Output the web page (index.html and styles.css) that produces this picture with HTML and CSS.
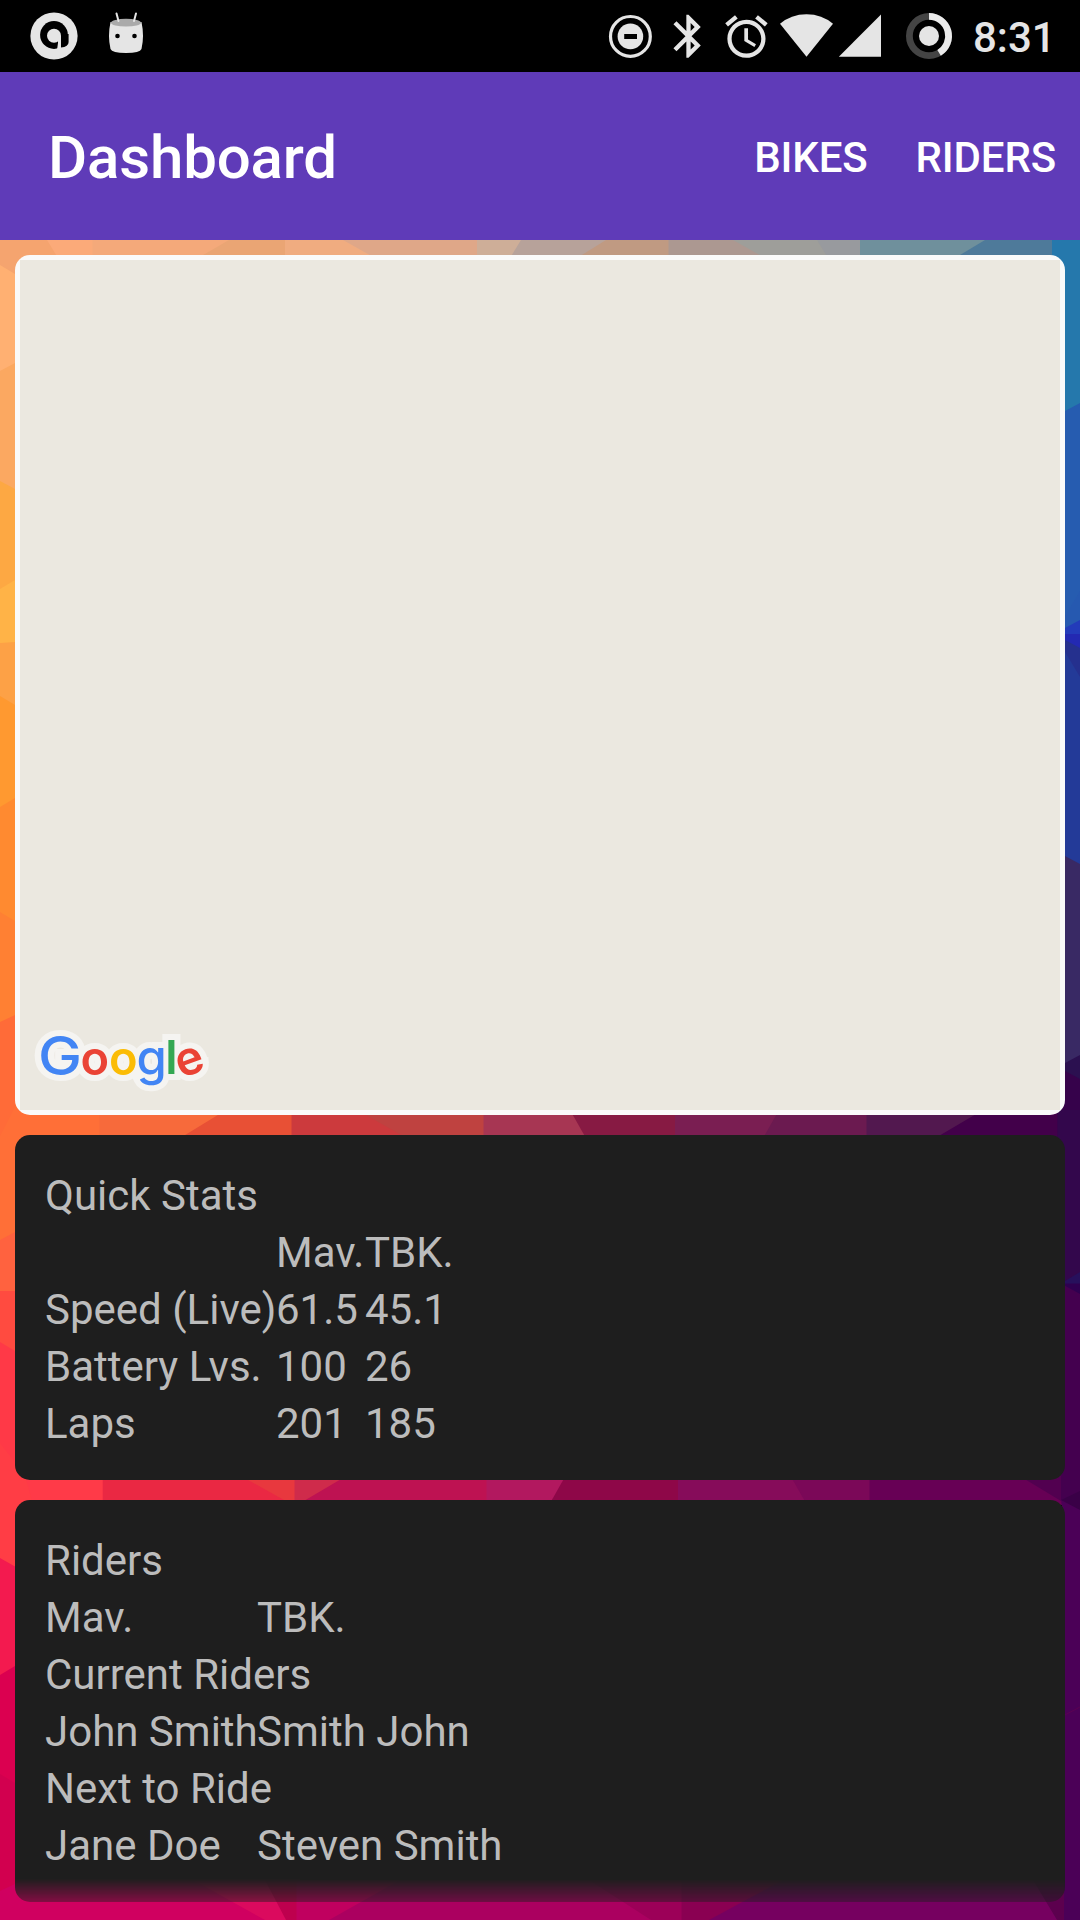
FILE: index.html
```html
<!DOCTYPE html>
<html lang="en">
<head>
<meta charset="utf-8">
<title>Dashboard</title>
<link rel="stylesheet" href="styles.css">
</head>
<body>
<div class="screen">
  <header class="status-bar">
    <svg class="status-icon" width="54" height="72" viewBox="27 0 54 72">
      <circle cx="54" cy="36" r="23.6" fill="#e5e5e5"/>
      <circle cx="54" cy="35" r="13.9" fill="#000"/>
      <circle cx="54" cy="35.8" r="7" fill="#e5e5e5"/>
      <path d="M58 36h3v14h-4l1-7z" fill="#e5e5e5"/>
      <path d="M61 34h7.6v8q0 5-7.6 5.400z" fill="#000"/>
    </svg>
    <svg class="status-icon robot" width="54" height="72" viewBox="99 0 54 72">
      <path d="M110.500 22Q126 25 141.500 22Q144.500 36 141.500 49Q140 53 126 53T110.500 49Q107.500 36 110.500 22Z" fill="#e5e5e5"/>
      <ellipse cx="126" cy="22.700" rx="15" ry="3.900" fill="#aaa"/>
      <path d="M116.500 13.500l2 7.500M136 13.500l-2 7.500" stroke="#e5e5e5" stroke-width="2" stroke-linecap="round"/>
      <circle cx="117.500" cy="36" r="2.300"/><circle cx="134.500" cy="36" r="2.300"/>
    </svg>
    <div class="status-right">
      <svg class="status-icon" width="54" height="72" viewBox="606 0 54 72">
        <circle cx="630.400" cy="36.400" r="19.900" fill="none" stroke="#e5e5e5" stroke-width="3.200"/>
        <circle cx="630.400" cy="36.400" r="12.800" fill="#e5e5e5"/>
        <path d="M624.200 34h12.800v5h-12.800z"/>
      </svg>
      <svg class="status-icon" width="55" height="72" viewBox="660 0 55 72">
        <path transform="translate(662.700 10.500) scale(2.150)" fill="#e5e5e5" d="M17.71 7.71L12 2h-1v7.590L6.410 5 5 6.410 10.590 12 5 17.590 6.410 19 11 14.410V22h1l5.710-5.710-4.300-4.290 4.300-4.290zM13 5.830l1.880 1.880L13 9.590V5.830zm1.880 10.460L13 18.170v-3.760l1.880 1.880z"/>
      </svg>
      <svg class="status-icon" width="60" height="72" viewBox="715 0 60 72">
        <path transform="translate(721 11.200) scale(2.120)" fill="#e5e5e5" d="M22 5.720l-4.600-3.860-1.290 1.530 4.600 3.860L22 5.720zM7.880 3.390L6.600 1.860 2 5.710l1.290 1.530 4.590-3.850zM12.500 8H11v6l4.750 2.850.750-1.230-3.750-2.220V8zM12 4c-4.970 0-9 4.030-9 9s4.020 9 9 9c4.970 0 9-4.030 9-9s-4.030-9-9-9zm0 16c-3.870 0-7-3.130-7-7s3.130-7 7-7 7 3.130 7 7-3.130 7-7 7z"/>
      </svg>
      <svg class="status-icon" width="61" height="72" viewBox="775 0 61 72">
        <path d="M806.500 56.700L780 23.800Q791 14.200 806.500 14.200T833 23.800Z" fill="#e5e5e5"/>
      </svg>
      <svg class="status-icon" width="64" height="72" viewBox="836 0 64 72">
        <path d="M838.800 56.800H881V14.500Z" fill="#e5e5e5"/>
      </svg>
      <svg class="status-icon" width="73" height="72" viewBox="900 0 73 72">
        <circle cx="929" cy="36" r="19.600" fill="none" stroke="#444" stroke-width="6.800"/>
        <path d="M929 16.400A19.600 19.600 0 0 1 939.100 52.800" fill="none" stroke="#ebebeb" stroke-width="6.800"/>
        <circle cx="929" cy="36" r="10" fill="#e5e5e5"/>
      </svg>
      <span class="clock">8:31</span>
    </div>
  </header>

  <nav class="app-bar">
    <h1 class="title">Dashboard</h1>
    <div class="actions"><span>BIKES</span><span>RIDERS</span></div>
  </nav>

  <main class="content">
    <svg class="wallpaper" width="1080" height="1680" viewBox="0 240 1080 1680">
      <!-- left facets -->
      <path fill="#f5a46f" d="M0 240H99V300H0z"/>
      <path fill="#ffb072" d="M0 265L30 283V400H0z"/>
      <path fill="#fba861" d="M0 371L30 355V500H0z"/>
      <path fill="#fda843" d="M0 481L30 497V600H0z"/>
      <path fill="#ffb347" d="M0 589L30 571V650H0z"/>
      <path fill="#fda146" d="M0 643L30 641V720H0z"/>
      <path fill="#ff9930" d="M0 696L30 714V820H0z"/>
      <path fill="#ff8a30" d="M0 807L30 789V940H0z"/>
      <path fill="#ff8033" d="M0 912L30 930V1040H0z"/>
      <path fill="#ff6b38" d="M0 1022L30 1008V1250H0z"/>
      <path fill="#ff6f37" d="M0 1136L16 1105H100V1250H0z"/>
      <path fill="#ff623f" d="M0 1240L30 1224V1300H0z"/>
      <path fill="#ff4b40" d="M0 1291H30V1370H0z"/>
      <path fill="#ff3947" d="M0 1342L30 1360V1580H0z"/>
      <path fill="#ff3d45" d="M0 1443L25 1475H110V1520H36V1580H0z"/>
      <path fill="#f31a4f" d="M0 1558L30 1575V1680H0z"/>
      <path fill="#db0050" d="M0 1675L30 1657V1800H0z"/>
      <path fill="#d2004f" d="M0 1774L30 1792V1900H0z"/>
      <path fill="#d00060" d="M0 1891L30 1877H300V1920H0z"/>
      <!-- strip below the app bar -->
      <path fill="#fbaa79" d="M47 240L58 258H1060V240z"/>
      <path fill="#f4a97a" d="M92.500 240V258H1060V240z"/>
      <path fill="#eaa574" d="M229 240L198 258H1060V240z"/>
      <path fill="#f0ac80" d="M285 240V258H1060V240z"/>
      <path fill="#dfa788" d="M343 240L375 258H1060V240z"/>
      <path fill="#ceae98" d="M477 240V258H1060V240z"/>
      <path fill="#b7a29a" d="M521 240L510 258H1060V240z"/>
      <path fill="#c09a82" d="M606 240L577 258H1060V240z"/>
      <path fill="#ac9891" d="M668.500 240V258H1060V240z"/>
      <path fill="#9e9e9a" d="M733 240L765 258H1060V240z"/>
      <path fill="#989a9e" d="M817 240L828 258H1060V240z"/>
      <path fill="#6f909c" d="M860 240V258H1060V240z"/>
      <path fill="#4e7a9a" d="M985 240L955 258H1060V240z"/>
      <!-- strip between the map and the stats -->
      <path fill="#f76a3b" d="M99.500 1110V1140H1060V1110z"/>
      <path fill="#e85035" d="M226 1110L177 1140H1060V1110z"/>
      <path fill="#cc3a3d" d="M291.500 1110V1140H1060V1110z"/>
      <path fill="#bf4240" d="M357 1110L410 1140H1060V1110z"/>
      <path fill="#a73653" d="M483.500 1110V1140H1060V1110z"/>
      <path fill="#871a43" d="M570 1110L587 1140H1060V1110z"/>
      <path fill="#7a1e52" d="M675 1110V1140H1060V1110z"/>
      <path fill="#6b1a50" d="M779 1110L762 1140H1060V1110z"/>
      <path fill="#52184f" d="M866.500 1110V1140H1060V1110z"/>
      <path fill="#42004a" d="M983 1110L932 1140H1060V1110z"/>
      <!-- strip between the stats and the riders -->
      <path fill="#ff3a48" d="M25 1475L33 1505H1062V1475z"/>
      <path fill="#ea2843" d="M102.700 1475V1505H1062V1475z"/>
      <path fill="#e8383e" d="M239 1475L293 1505H1062V1475z"/>
      <path fill="#cf2b4b" d="M294.500 1475V1505H1062V1475z"/>
      <path fill="#be1252" d="M348 1475L297 1505H1062V1475z"/>
      <path fill="#b2185f" d="M486.500 1475V1505H1062V1475z"/>
      <path fill="#8e0748" d="M566 1475L549 1505H1062V1475z"/>
      <path fill="#860c5a" d="M678 1475V1505H1062V1475z"/>
      <path fill="#7b0858" d="M790 1475L807 1505H1062V1475z"/>
      <path fill="#670055" d="M869.500 1475V1505H1062V1475z"/>
      <!-- strip under the riders -->
      <path fill="#db0a5e" d="M193 1880L265 1920H1065V1880z"/>
      <path fill="#be004e" d="M265 1880L286 1920H1065V1880z"/>
      <path fill="#c0005f" d="M296.500 1880V1920H1065V1880z"/>
      <path fill="#ab0060" d="M400 1880L329 1920H1065V1880z"/>
      <path fill="#9c0058" d="M589 1880L651 1920H1065V1880z"/>
      <path fill="#8a0052" d="M681.500 1880V1920H1065V1880z"/>
      <path fill="#760060" d="M783 1880L709 1920H1065V1880z"/>
      <path fill="#5c004e" d="M1033 1880L1057 1920H1065V1880z"/>
      <!-- right facets -->
      <path fill="#2578ac" d="M1052 240H1080V430H1052z"/>
      <path fill="#265cb0" d="M1050 419L1080 403V640H1050z"/>
      <path fill="#2659b0" d="M1050 641L1080 591V640H1050z"/>
      <path fill="#233bba" d="M1050 636L1080 620V640H1050z"/>
      <path fill="#2329b2" d="M1050 634H1080V660H1050z"/>
      <path fill="#25308e" d="M1050 632L1080 648V700H1050z"/>
      <path fill="#233a98" d="M1050 627L1080 677V880H1050z"/>
      <path fill="#392964" d="M1050 848L1080 864V1080H1050z"/>
      <path fill="#2b1050" d="M1050 1071L1080 1055V1090H1050z"/>
      <path fill="#36024b" d="M1050 1063L1080 1079V1300H1057.500V1110H1050z"/>
      <path fill="#33074c" d="M1057.500 1110H1080V1300H1057.500z"/>
      <path fill="#27105c" d="M1060 1284L1080 1272V1284z"/>
      <path fill="#2f0050" d="M1060 1283.500H1080V1300z"/>
      <path fill="#44004f" d="M1060 1283L1080 1294V1500H1061V1300z"/>
      <path fill="#520050" d="M1018 1475L1061 1501V1475z"/>
      <path fill="#4b0057" d="M1061 1500H1080V1920H1064V1520z"/>
      <path fill="#3a0047" d="M1061 1500L1080 1491V1510z"/>
      <path d="M1061 1717L1080 1707" stroke="#5c0052"/>
    </svg>

    <div class="cards">
      <section class="map-card">
        <svg class="google" width="190" height="80" viewBox="30 1020 190 80" aria-label="Google">
          <g class="halo">
            <text class="cap" x="38" y="1075" textLength="44" lengthAdjust="spacingAndGlyphs">G</text>
            <text x="80.400" y="1074.500">o</text><text x="109" y="1074.500">o</text>
            <text class="tail" x="136.500" y="1075">g</text><text x="165.200" y="1074">l</text>
            <text x="176" y="1074.500" transform="rotate(-20 190 1062)">e</text>
          </g>
          <g>
            <text class="cap blue" x="38" y="1075" textLength="44" lengthAdjust="spacingAndGlyphs">G</text>
            <text class="red" x="80.400" y="1074.500">o</text><text class="yellow" x="109" y="1074.500">o</text>
            <text class="tail blue" x="136.500" y="1075">g</text><text class="green" x="165.200" y="1074">l</text>
            <text class="red" x="176" y="1074.500" transform="rotate(-20 190 1062)">e</text>
          </g>
        </svg>
      </section>

      <section class="card">
        <div>Quick Stats</div>
        <div class="grid stats">
          <span></span><span>Mav.</span><span>TBK.</span>
          <span>Speed (Live)</span><span>61.5</span><span>45.1</span>
          <span>Battery Lvs.</span><span>100</span><span>26</span>
          <span>Laps</span><span>201</span><span>185</span>
        </div>
      </section>

      <section class="card">
        <div>Riders</div>
        <div class="grid riders">
          <span>Mav.</span><span>TBK.</span>
          <span class="wide">Current Riders</span>
          <span>John Smith</span><span>Smith John</span>
          <span class="wide">Next to Ride</span>
          <span>Jane Doe</span><span>Steven Smith</span>
        </div>
      </section>
    </div>
  </main>
</div>
</body>
</html>
```
FILE: styles.css
```css
body {
  margin: 0;
  background: #000;
  font-family: Roboto, "Liberation Sans", sans-serif;
}

.screen {
  width: 1080px;
  height: 1920px;
  overflow: hidden;
  display: flex;
  flex-direction: column;
}

.status-bar {
  height: 72px;
  flex: none;
  display: flex;
  padding-left: 27px;
  background: #000;
}

.status-icon {
  display: block;
  flex: none;
}

.robot {
  margin-left: 18px;
}

.status-right {
  display: flex;
  flex: 1;
  margin-left: 453px;
}

.clock {
  color: #e5e5e5;
  font-size: 42px;
  font-weight: 500;
  line-height: 75px;
}

.app-bar {
  height: 168px;
  flex: none;
  display: flex;
  align-items: center;
  justify-content: space-between;
  box-sizing: border-box;
  padding: 0 24px 0 48px;
  background: #5f3bb8;
  color: #fff;
}

.title {
  margin: 0;
  padding-top: 4px;
  font-size: 60px;
  font-weight: 500;
  letter-spacing: -0.15px;
  line-height: 164px;
}

.actions {
  display: flex;
  gap: 48px;
  padding-top: 2px;
  font-size: 42px;
  font-weight: 500;
  letter-spacing: -0.15px;
}

.content {
  flex: 1;
  display: grid;
  min-height: 0;
}

.wallpaper,
.cards {
  grid-area: 1 / 1;
  display: block;
}

.cards {
  position: relative;
  display: flex;
  flex-direction: column;
  gap: 20px;
  box-sizing: border-box;
  height: 1680px;
  padding: 15px 15px 0;
  -webkit-mask-image: linear-gradient(#000 1639px, transparent 1680px);
  mask-image: linear-gradient(#000 1639px, transparent 1680px);
}

.map-card {
  height: 860px;
  flex: none;
  box-sizing: border-box;
  display: flex;
  align-items: flex-end;
  padding: 0 0 15px 15px;
  border-radius: 15px;
  background: linear-gradient(#ebe8e0, #ebe8e0) 5px 5px / 1040px 850px no-repeat #fafafa;
}

.google {
  display: block;
  font-family: Inter, sans-serif;
  font-size: 47px;
  font-weight: 600;
}

.cap {
  font-size: 54px;
  font-weight: 500;
}

.tail {
  font-size: 49px;
  font-weight: 500;
}

.halo {
  fill: #f5f4f1;
  stroke: #f5f4f1;
  stroke-width: 12px;
}

.blue { fill: #4285f4; }
.red { fill: #ea4335; }
.yellow { fill: #fbbc05; }
.green { fill: #34a853; }

.card {
  flex: none;
  padding: 32px 30px 28px;
  border-radius: 15px;
  background: #1e1e1e;
  color: #bcbcbc;
  font-size: 42px;
  line-height: 57px;
  white-space: nowrap;
}

.grid {
  display: grid;
  grid-auto-rows: 57px;
}

.stats {
  grid-template-columns: 231px 89px auto;
}

.riders {
  grid-template-columns: 212px auto;
}

.wide {
  grid-column: 1 / -1;
}
```
